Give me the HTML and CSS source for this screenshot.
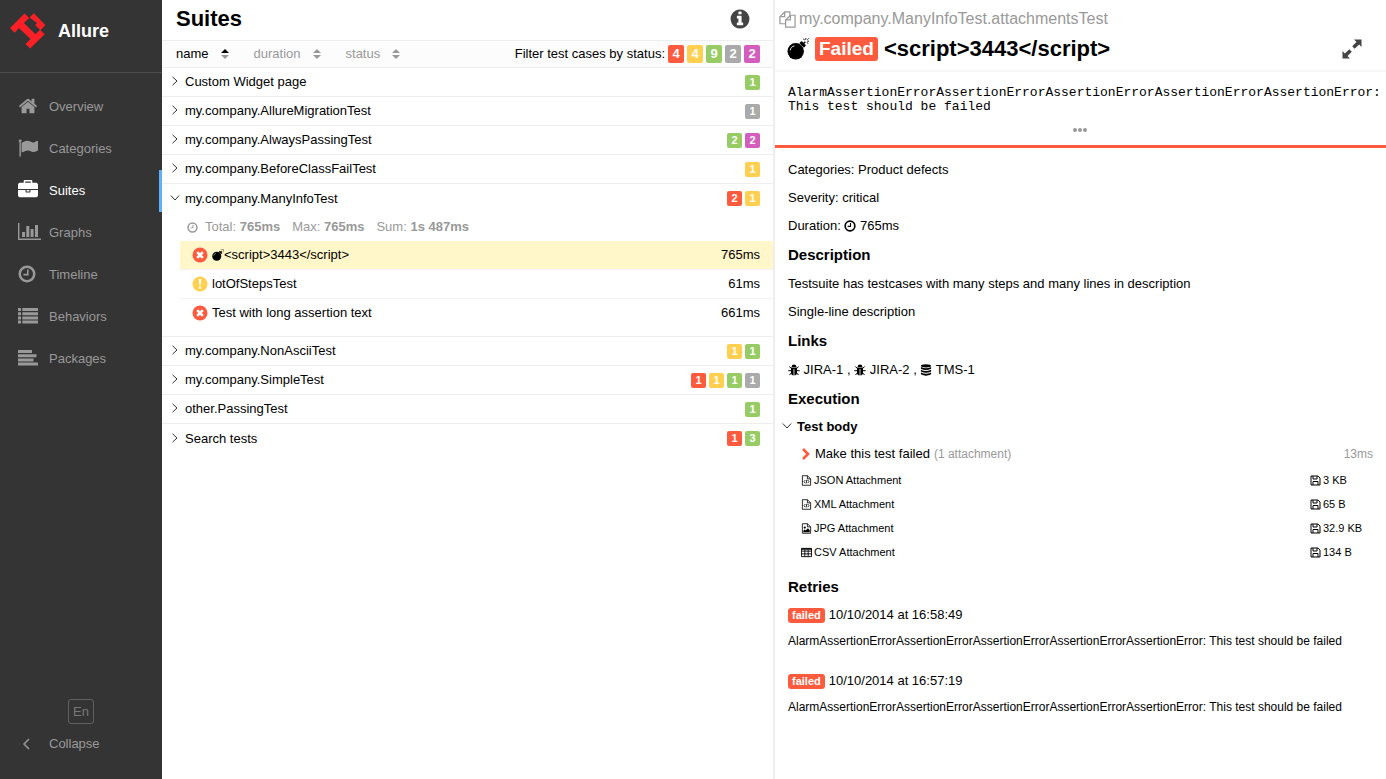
FILE: index.html
```html
<!DOCTYPE html>
<html lang="en">
<head>
    <meta charset="UTF-8">
    <title>Allure Report</title>
    <link rel="stylesheet" href="styles.css">
</head>
<body>
<svg class="sprite" aria-hidden="true">
    <symbol id="i-home" viewBox="0 0 1792 1792"><path d="M1472 992v480q0 26-19 45t-45 19h-384v-384h-256v384h-384q-26 0-45-19t-19-45v-480q0-1 .5-3t.5-3l575-474 575 474q1 2 1 6zm223-69l-62 74q-8 9-21 11h-3q-13 0-21-7l-692-577-692 577q-12 8-24 7-13-2-21-11l-62-74q-8-10-7-23.5t11-21.5l719-599q32-26 76-26t76 26l244 204v-195q0-14 9-23t23-9h192q14 0 23 9t9 23v408l219 182q10 8 11 21.5t-7 23.5z"/></symbol>
    <symbol id="i-flag" viewBox="0 0 1792 1792"><path d="M320 256q0 72-64 110v1266q0 13-9.5 22.5t-22.5 9.5h-64q-13 0-22.5-9.5t-9.5-22.5v-1266q-64-38-64-110 0-53 37.5-90.5t90.5-37.5 90.5 37.5 37.5 90.5zm1472 64v763q0 25-12.5 38.5t-39.5 27.5q-215 116-369 116-61 0-123.5-22t-108.5-48-115.5-48-142.5-22q-192 0-464 146-17 9-33 9-26 0-45-19t-19-45v-742q0-32 31-55 21-14 79-43 236-120 421-120 107 0 200 29t219 88q38 19 88 19 54 0 117.5-21t110-47 88-47 54.5-21q26 0 45 19t19 45z"/></symbol>
    <symbol id="i-briefcase" viewBox="0 0 1792 1792"><path d="M640 256h512v-128h-512v128zm1152 640v480q0 66-47 113t-113 47h-1472q-66 0-113-47t-47-113v-480h672v160q0 26 19 45t45 19h320q26 0 45-19t19-45v-160h672zm-768 0v128h-256v-128h256zm768-480v384h-1792v-384q0-66 47-113t113-47h352v-160q0-40 28-68t68-28h576q40 0 68 28t28 68v160h352q66 0 113 47t47 113z"/></symbol>
    <symbol id="i-chart" viewBox="0 0 23 20"><path d="M0 1h1.4v15.6H23V18H0zM4 10h3v5H4zM8.300 4h3v11h-3zM12.600 7h3v8h-3zM17 3h3v12h-3z"/></symbol>
    <symbol id="i-clock" viewBox="0 0 18 18"><path d="M9 .5a8.500 8.500 0 1 0 0 17 8.500 8.500 0 0 0 0-17zm0 2.500a6 6 0 1 1 0 12 6 6 0 0 1 0-12zm0 1.600h1.600V10.400H5.400V8.800H9z" fill-rule="evenodd"/></symbol>
    <symbol id="i-list" viewBox="0 0 20 18"><path d="M0 1h3v3H0zM4.300 1H20v3H4.300zM0 5.200h3v3H0zM4.300 5.200H20v3H4.300zM0 9.400h3v3H0zM4.300 9.400H20v3H4.300zM0 13.600h3v3H0zM4.300 13.600H20v3H4.300z"/></symbol>
    <symbol id="i-align" viewBox="0 0 20 18"><path d="M0 1h14v3H0zM0 5.200h18.500v3H0zM0 9.400h15.500v3H0zM0 13.600h20v3H0z"/></symbol>
    <symbol id="i-info" viewBox="0 0 1792 1792"><path d="M1152 1376v-160q0-14-9-23t-23-9h-96v-512q0-14-9-23t-23-9h-320q-14 0-23 9t-9 23v160q0 14 9 23t23 9h96v320h-96q-14 0-23 9t-9 23v160q0 14 9 23t23 9h448q14 0 23-9t9-23zm-128-896v-160q0-14-9-23t-23-9h-192q-14 0-23 9t-9 23v160q0 14 9 23t23 9h192q14 0 23-9t9-23zm640 416q0 209-103 385.500t-279.500 279.500-385.500 103-385.500-103-279.500-279.500-103-385.500 103-385.500 279.500-279.500 385.500-103 385.500 103 279.500 279.500 103 385.500z"/></symbol>
    <symbol id="i-right" viewBox="0 0 10 10"><path d="M2.500 .8l4.500 4.200-4.500 4.200" fill="none" stroke="currentColor"/></symbol>
    <symbol id="i-down" viewBox="0 0 10 10"><path d="M.8 2.500L5 7l4.200-4.500" fill="none" stroke="currentColor"/></symbol>
    <symbol id="i-failed" viewBox="0 0 16 16"><circle cx="8" cy="8" r="7.500"/><path d="M5.200 5.200l5.600 5.600M10.800 5.200l-5.600 5.600" stroke="#fff" stroke-width="2.600"/></symbol>
    <symbol id="i-broken" viewBox="0 0 16 16"><circle cx="8" cy="8" r="7.500"/><path d="M6.800 3h2.400l-.4 6H7.200zM6.900 10.400h2.200v2.300H6.900z" fill="#fff"/></symbol>
    <symbol id="i-bomb" viewBox="0 0 24 24"><circle cx="9.500" cy="14.500" r="9"/><path d="M13.500 5.500l2.500-2.200 4.700 4.700-2.200 2.500z"/><path d="M17.500 6.500l2.500-2.500" stroke="currentColor" stroke-width="1.600"/><path d="M20.500 0v2M24 3.500h-2M18 .8l1 1.600M23.600 .4l-1.400 1.400M23.200 6l-1.600-1" stroke="currentColor"/><path d="M3.500 13.500c.3-2.600 2-4.400 4.500-4.800" fill="none" stroke="#fff"/></symbol>
    <symbol id="i-copy" viewBox="0 0 18 18"><path d="M6 4.500V1H11.500v3.500M6 1L1 6v7.500h6M1 6h5V1M12 4.500h5V17H7V9.500zM12 4.500v5H7" fill="none" stroke="currentColor" stroke-width="1.300"/></symbol>
    <symbol id="i-expand" viewBox="0 0 20 20"><path d="M12 .5h7.500V8l-2.400-2.400-4.400 4.200-2.500-2.500 4.300-4.300zM8 19.500H.5V12l2.400 2.400 4.400-4.200 2.500 2.500L5.500 17z"/></symbol>
    <symbol id="i-bug" viewBox="0 0 12 12"><path d="M3.600 3a2.400 2.400 0 0 1 4.800 0zM3 3.600h6V9c0 1.500-1.300 2.500-2.600 2.500V5h-.8v6.500C4.300 11.500 3 10.500 3 9z"/><path d="M1.300 2.600L3.500 4.500M10.700 2.600L8.500 4.500M.3 6.700H3.200M11.700 6.700H8.800M1.500 11l2-2.300M10.500 11l-2-2.300" stroke="currentColor"/></symbol>
    <symbol id="i-database" viewBox="0 0 12 13"><ellipse cx="6" cy="2" rx="5.500" ry="1.800"/><path d="M.5 3.300q5.500 2.600 11 0v1.900q-5.500 2.800-11 0zM.5 6.300q5.500 2.600 11 0v1.900q-5.500 2.800-11 0zM.5 9.300q5.500 2.600 11 0v1.900q-5.500 2.800-11 0z"/></symbol>
    <symbol id="i-code" viewBox="0 0 11 12"><path d="M1 .8h5.500L10 4.200v7H1zM6.500 .8v3.400H10M4.200 5.500L2.800 7.200l1.400 1.700M6.800 5.500l1.400 1.700-1.400 1.700M5.900 5.200l-.8 4" fill="none" stroke="currentColor" stroke-width=".9"/></symbol>
    <symbol id="i-image" viewBox="0 0 11 12"><path d="M1 .8h5.500L10 4.200v7H1zM6.500 .8v3.400H10" fill="none" stroke="currentColor" stroke-width=".9"/><circle cx="3.600" cy="5" r="1.200"/><path d="M2 10V8.500l1.500-1.300 1 1L7 5.700l2 2V10z"/></symbol>
    <symbol id="i-table" viewBox="0 0 12 12"><path d="M.5 1.500h11v9H.5zM.5 4.500h11M.5 7.500h11M4.200 3v7.500M7.800 3v7.500" fill="none" stroke="currentColor"/><path d="M.5 1.500h11v1.500H.5z"/></symbol>
    <symbol id="i-floppy" viewBox="0 0 11 11"><path d="M1 1h7l2 2v7H1zM3 1v3h4V1M3 10V6.500h5V10" fill="none" stroke="currentColor"/></symbol>
</svg>

<div class="app">
    <aside class="side">
        <a class="brand" href="#">
            <svg class="logo" viewBox="30 41 106 108">
                <path d="M30 86L74 42 88 56 72 71 107 105 121 91 135 105 91 148 77 134 92 119 57 86 44 100z"/>
                <path d="M89 54L102 41 136 76 135 80 122 93 106 77 112 71z"/>
            </svg>
            <span>Allure</span>
        </a>
        <nav class="menu">
            <a class="menu-item" href="#"><svg class="menu-icon"><use href="#i-home"/></svg>Overview</a>
            <a class="menu-item" href="#"><svg class="menu-icon"><use href="#i-flag"/></svg>Categories</a>
            <a class="menu-item active" href="#"><svg class="menu-icon"><use href="#i-briefcase"/></svg>Suites</a>
            <a class="menu-item" href="#"><svg class="menu-icon wide"><use href="#i-chart"/></svg>Graphs</a>
            <a class="menu-item" href="#"><svg class="menu-icon small"><use href="#i-clock"/></svg>Timeline</a>
            <a class="menu-item" href="#"><svg class="menu-icon"><use href="#i-list"/></svg>Behaviors</a>
            <a class="menu-item" href="#"><svg class="menu-icon"><use href="#i-align"/></svg>Packages</a>
        </nav>
        <div class="side-footer">
            <button class="lang">En</button>
            <button class="collapse"><svg viewBox="0 0 8 12"><path d="M7 1L2 6l5 5" fill="none" stroke="currentColor" stroke-width="1.500"/></svg>Collapse</button>
        </div>
    </aside>

    <main class="suites">
        <header class="suites-head">
            <h1>Suites</h1>
            <button class="icon-btn" aria-label="Info"><svg class="info"><use href="#i-info"/></svg></button>
        </header>
        <div class="toolbar">
            <button class="sorter active">name <svg viewBox="0 0 8 10"><path class="sort-up" d="M0 4L4 0l4 4z"/><path d="M0 6h8L4 10z"/></svg></button>
            <button class="sorter">duration <svg viewBox="0 0 8 10"><path d="M0 4L4 0l4 4zM0 6h8L4 10z"/></svg></button>
            <button class="sorter">status <svg viewBox="0 0 8 10"><path d="M0 4L4 0l4 4zM0 6h8L4 10z"/></svg></button>
            <div class="filter">
                <span class="filter-label">Filter test cases by status:</span>
                <button class="tag failed">4</button>
                <button class="tag broken">4</button>
                <button class="tag passed">9</button>
                <button class="tag skipped">2</button>
                <button class="tag unknown">2</button>
            </div>
        </div>

        <div class="tree">
            <a class="suite" href="#"><svg class="arrow"><use href="#i-right"/></svg><span class="name">Custom Widget page</span><span class="tag passed">1</span></a>
            <a class="suite" href="#"><svg class="arrow"><use href="#i-right"/></svg><span class="name">my.company.AllureMigrationTest</span><span class="tag skipped">1</span></a>
            <a class="suite" href="#"><svg class="arrow"><use href="#i-right"/></svg><span class="name">my.company.AlwaysPassingTest</span><span class="tag passed">2</span><span class="tag unknown">2</span></a>
            <a class="suite" href="#"><svg class="arrow"><use href="#i-right"/></svg><span class="name">my.company.BeforeClassFailTest</span><span class="tag broken">1</span></a>
            <a class="suite open" href="#"><svg class="arrow"><use href="#i-down"/></svg><span class="name">my.company.ManyInfoTest</span><span class="tag failed">2</span><span class="tag broken">1</span></a>
            <div class="cases">
                <div class="stats"><svg><use href="#i-clock"/></svg><span>Total: <b>765ms</b></span><span>Max: <b>765ms</b></span><span>Sum: <b>1s 487ms</b></span></div>
                <a class="case selected" href="#"><svg class="status-icon text-failed"><use href="#i-failed"/></svg><svg class="bomb"><use href="#i-bomb"/></svg><span class="name">&lt;script&gt;3443&lt;/script&gt;</span><span>765ms</span></a>
                <a class="case" href="#"><svg class="status-icon text-broken"><use href="#i-broken"/></svg><span class="name">lotOfStepsTest</span><span>61ms</span></a>
                <a class="case" href="#"><svg class="status-icon text-failed"><use href="#i-failed"/></svg><span class="name">Test with long assertion text</span><span>661ms</span></a>
            </div>
            <a class="suite" href="#"><svg class="arrow"><use href="#i-right"/></svg><span class="name">my.company.NonAsciiTest</span><span class="tag broken">1</span><span class="tag passed">1</span></a>
            <a class="suite" href="#"><svg class="arrow"><use href="#i-right"/></svg><span class="name">my.company.SimpleTest</span><span class="tag failed">1</span><span class="tag broken">1</span><span class="tag passed">1</span><span class="tag skipped">1</span></a>
            <a class="suite" href="#"><svg class="arrow"><use href="#i-right"/></svg><span class="name">other.PassingTest</span><span class="tag passed">1</span></a>
            <a class="suite open" href="#"><svg class="arrow"><use href="#i-right"/></svg><span class="name">Search tests</span><span class="tag failed">1</span><span class="tag passed">3</span></a>
        </div>
    </main>

    <section class="result">
        <header class="result-head">
            <div class="full-name"><button class="icon-btn" aria-label="Copy"><svg class="copy"><use href="#i-copy"/></svg></button>my.company.ManyInfoTest.attachmentsTest</div>
            <div class="result-title">
                <svg class="bomb-big"><use href="#i-bomb"/></svg>
                <span class="label big">Failed</span>
                <h2>&lt;script&gt;3443&lt;/script&gt;</h2>
                <button class="icon-btn" aria-label="Expand"><svg class="expand"><use href="#i-expand"/></svg></button>
            </div>
        </header>
        <div class="message">
            <pre>AlarmAssertionErrorAssertionErrorAssertionErrorAssertionErrorAssertionError:
This test should be failed</pre>
            <button class="more" aria-label="Show trace"><i></i><i></i><i></i></button>
        </div>

        <div class="overview">
            <p>Categories: Product defects</p>
            <p>Severity: critical</p>
            <p>Duration: <svg class="inline"><use href="#i-clock"/></svg> 765ms</p>
            <h3>Description</h3>
            <p>Testsuite has testcases with many steps and many lines in description</p>
            <p>Single-line description</p>
            <h3>Links</h3>
            <p><a href="#"><svg class="inline"><use href="#i-bug"/></svg> JIRA-1</a> , <a href="#"><svg class="inline"><use href="#i-bug"/></svg> JIRA-2</a> , <a href="#"><svg class="inline"><use href="#i-database"/></svg> TMS-1</a></p>
            <h3>Execution</h3>
            <div class="execution">
                <a class="body-title" href="#"><svg class="arrow"><use href="#i-down"/></svg>Test body</a>
                <a class="step" href="#"><svg viewBox="0 0 8 12"><path d="M1 1l5 5-5 5" fill="none" stroke="currentColor" stroke-width="2.600"/></svg>Make this test failed <small>(1 attachment)</small><span class="time">13ms</span></a>
                <a class="attachment" href="#"><svg><use href="#i-code"/></svg><span class="name">JSON Attachment</span><svg><use href="#i-floppy"/></svg><span class="size">3 KB</span></a>
                <a class="attachment" href="#"><svg><use href="#i-code"/></svg><span class="name">XML Attachment</span><svg><use href="#i-floppy"/></svg><span class="size">65 B</span></a>
                <a class="attachment" href="#"><svg><use href="#i-image"/></svg><span class="name">JPG Attachment</span><svg><use href="#i-floppy"/></svg><span class="size">32.9 KB</span></a>
                <a class="attachment" href="#"><svg><use href="#i-table"/></svg><span class="name">CSV Attachment</span><svg><use href="#i-floppy"/></svg><span class="size">134 B</span></a>
            </div>
            <h3>Retries</h3>
            <a class="retry" href="#">
                <span class="retry-head"><span class="label">failed</span>10/10/2014 at 16:58:49</span>
                <span class="retry-text">AlarmAssertionErrorAssertionErrorAssertionErrorAssertionErrorAssertionError: This test should be failed</span>
            </a>
            <a class="retry" href="#">
                <span class="retry-head"><span class="label">failed</span>10/10/2014 at 16:57:19</span>
                <span class="retry-text">AlarmAssertionErrorAssertionErrorAssertionErrorAssertionErrorAssertionError: This test should be failed</span>
            </a>
        </div>
    </section>
</div>
</body>
</html>
```
FILE: styles.css
```css
* {
    box-sizing: border-box;
}

body {
    margin: 0;
    font: 13px/18px "Liberation Sans", Helvetica, Arial, sans-serif;
    color: #000;
    background: #fff;
}

a {
    color: inherit;
    text-decoration: none;
}

button {
    padding: 0;
    border: 0;
    background: none;
    font: inherit;
    color: inherit;
    cursor: pointer;
}

svg {
    display: block;
    flex: none;
    fill: currentColor;
}

h1, h2, h3, p, pre {
    margin: 0;
}

.sprite {
    position: absolute;
    width: 0;
    height: 0;
}

.app {
    display: flex;
    min-height: 100vh;
}

.name {
    flex: 1;
}

/* sidebar */
.side {
    display: flex;
    flex-direction: column;
    flex: none;
    width: 162px;
    background: #343434;
    color: #999;
}

.brand {
    display: flex;
    align-items: center;
    gap: 13px;
    height: 73px;
    padding: 0 10px 10px;
    border-bottom: 1px solid #4d4d4d;
    color: #fff;
    font-size: 18px;
    font-weight: bold;
}

.logo {
    width: 35px;
    height: 36px;
    fill: #fb2025;
}

.menu {
    padding-top: 13px;
}

.menu-item {
    display: flex;
    align-items: center;
    height: 42px;
    padding-left: 18px;
}

.menu-icon {
    width: 20px;
    height: 20px;
    margin: 0 11px 2px 0;
}

.menu-icon.wide {
    width: 23px;
    margin-right: 8px;
}

.menu-icon.small {
    width: 18px;
    margin-right: 13px;
}

.menu-item.active {
    border-right: 3px solid #5fb0f7;
    color: #fff;
}

.side-footer {
    display: flex;
    flex-direction: column;
    margin-top: auto;
    padding-bottom: 16px;
}

.lang {
    align-self: center;
    width: 26px;
    height: 25px;
    border: 1px solid #606060;
    border-radius: 3px;
    color: #777;
}

.collapse {
    display: flex;
    align-items: center;
    height: 39px;
    padding-left: 22px;
}

.collapse svg {
    width: 8px;
    height: 12px;
    margin-right: 19px;
}

/* suites */
.suites, .result {
    flex: 1;
    min-width: 0;
}

.suites {
    border-right: 2px solid #eee;
}

.suites-head {
    display: flex;
    justify-content: space-between;
    align-items: center;
    height: 40px;
    padding: 0 22px 2px 14px;
}

h1 {
    font-size: 22px;
    line-height: 26px;
}

.info {
    width: 22px;
    height: 22px;
    color: #444;
}

.toolbar {
    display: flex;
    align-items: center;
    height: 28px;
    padding: 0 13px 0 14px;
    border: solid #eee;
    border-width: 1px 0;
    background: #fcfcfc;
}

.sorter {
    display: flex;
    align-items: center;
    gap: 12px;
    margin-right: 25px;
    color: #999;
}

.sorter svg {
    width: 8px;
    height: 10px;
}

.sorter.active {
    color: #000;
}

.sorter.active svg {
    fill: #999;
}

.sorter.active .sort-up {
    fill: #000;
}

.filter {
    display: flex;
    align-items: center;
    margin-left: auto;
}

.tag {
    width: 15px;
    height: 15px;
    margin-left: 3px;
    border-radius: 2px;
    color: #fff;
    font-size: 11px;
    font-weight: bold;
    line-height: 15px;
    text-align: center;
}

.filter .tag {
    width: 16px;
    height: 18px;
    font-size: 13px;
    line-height: 18px;
}

.failed {
    background: #fd5a3e;
}

.broken {
    background: #ffd050;
}

.passed {
    background: #97cc64;
}

.skipped {
    background: #aaa;
}

.unknown {
    background: #d35ebe;
}

.suite {
    display: flex;
    align-items: center;
    height: 29px;
    padding: 0 13px 0 8px;
    border-bottom: 1px solid #eee;
}

.suite.open {
    border-bottom: 0;
}

.arrow {
    width: 10px;
    height: 10px;
    margin: 0 5px 2px 0;
    color: #333;
}

.cases {
    padding: 0 0 8px 18px;
    border-bottom: 1px solid #eee;
}

.stats {
    display: flex;
    align-items: center;
    gap: 12px;
    height: 28px;
    padding-left: 7px;
    color: #999;
}

.stats svg {
    width: 11px;
    height: 11px;
    margin-right: -5px;
}

.case {
    display: flex;
    align-items: center;
    height: 29px;
    padding: 0 13px 0 12px;
    border-bottom: 1px solid #f3f3f3;
}

.case:last-child {
    border-color: transparent;
}

.case.selected {
    background: #fff6c9;
}

.status-icon {
    width: 16px;
    height: 16px;
    margin-right: 4px;
}

.text-failed {
    color: #fd5a3e;
}

.text-broken {
    color: #ffd050;
}

.bomb {
    width: 12px;
    height: 14px;
}

/* test result */
.result-head {
    height: 72px;
    padding-top: 8px;
    border-bottom: 2px solid #f7f7f7;
}

.full-name {
    display: flex;
    align-items: center;
    gap: 3px;
    height: 22px;
    padding-left: 4px;
    color: #999;
    font-size: 16px;
}

.copy {
    width: 17px;
    height: 17px;
}

.result-title {
    display: flex;
    align-items: center;
    height: 38px;
    padding: 0 24px 0 12px;
}

.bomb-big {
    width: 22px;
    height: 22px;
    margin-right: 6px;
}

.label {
    padding: 0 4px;
    border-radius: 3px;
    background: #fd5a3e;
    color: #fff;
    font-size: 11px;
    font-weight: bold;
    line-height: 15px;
}

.label.big {
    font-size: 19px;
    line-height: 24px;
}

h2 {
    flex: 1;
    margin-left: 6px;
    font-size: 22px;
    line-height: 26px;
}

.expand {
    width: 20px;
    height: 20px;
    color: #444;
}

.message {
    padding: 14px 0 12px 13px;
    border-bottom: 3px solid #fd5a3e;
}

pre {
    font: 13px/14px "Liberation Mono", "Courier New", monospace;
}

.more {
    display: flex;
    gap: 1px;
    margin: 13px auto 0;
    padding: 1px 14px 1px 0;
}

.more i {
    width: 4px;
    height: 4px;
    border-radius: 2px;
    background: #999;
}

.overview {
    padding: 8px 13px;
}

p {
    line-height: 28px;
}

.inline {
    display: inline-block;
    width: 12px;
    height: 12px;
    vertical-align: -2px;
}

h3 {
    font-size: 15px;
    line-height: 30px;
}

.body-title {
    display: flex;
    align-items: center;
    height: 26px;
    margin-left: -6px;
    font-weight: bold;
}

.step {
    display: flex;
    align-items: center;
    height: 28px;
    padding-left: 14px;
}

.step svg {
    width: 8px;
    height: 12px;
    margin-right: 5px;
    color: #fd5a3e;
}

.step small {
    margin-left: 4px;
    color: #999;
    font-size: 12px;
}

.time {
    margin-left: auto;
    color: #999;
    font-size: 12px;
}

.attachment {
    display: flex;
    align-items: center;
    gap: 2px;
    height: 24px;
    padding-left: 13px;
    font-size: 11px;
}

.attachment svg {
    width: 11px;
    height: 11px;
}

.size {
    width: 50px;
}

.execution {
    padding-bottom: 8px;
}

.retry {
    display: block;
    padding-bottom: 14px;
}

.retry-head {
    display: flex;
    align-items: center;
    gap: 4px;
    height: 26px;
}

.retry-text {
    display: block;
    font-size: 12px;
    line-height: 26px;
    overflow-wrap: anywhere;
}
```
